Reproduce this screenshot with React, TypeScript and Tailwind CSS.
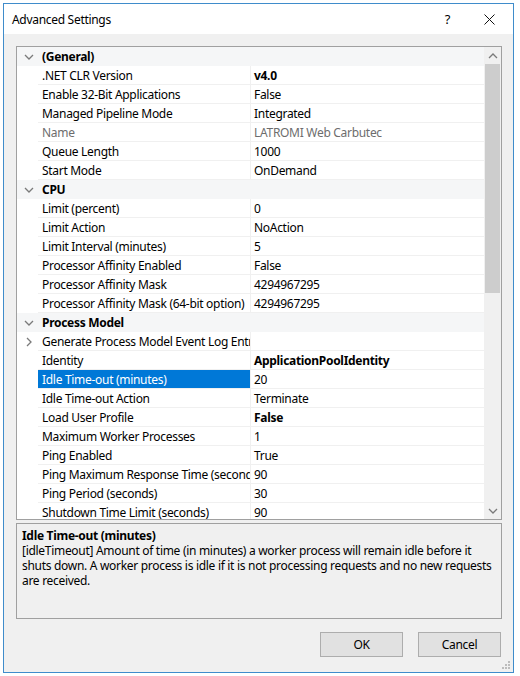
import React from "react";

type Row =
  | { kind: "cat"; label: string }
  | { kind: "prop"; label: string; value: string; bold?: boolean; disabled?: boolean; selected?: boolean; expandable?: boolean };

const ROWS: Row[] = [
  { kind: "cat", label: "(General)" },
  { kind: "prop", label: ".NET CLR Version", value: "v4.0", bold: true },
  { kind: "prop", label: "Enable 32-Bit Applications", value: "False" },
  { kind: "prop", label: "Managed Pipeline Mode", value: "Integrated" },
  { kind: "prop", label: "Name", value: "LATROMI Web Carbutec", disabled: true },
  { kind: "prop", label: "Queue Length", value: "1000" },
  { kind: "prop", label: "Start Mode", value: "OnDemand" },
  { kind: "cat", label: "CPU" },
  { kind: "prop", label: "Limit (percent)", value: "0" },
  { kind: "prop", label: "Limit Action", value: "NoAction" },
  { kind: "prop", label: "Limit Interval (minutes)", value: "5" },
  { kind: "prop", label: "Processor Affinity Enabled", value: "False" },
  { kind: "prop", label: "Processor Affinity Mask", value: "4294967295" },
  { kind: "prop", label: "Processor Affinity Mask (64-bit option)", value: "4294967295" },
  { kind: "cat", label: "Process Model" },
  { kind: "prop", label: "Generate Process Model Event Log Entry", value: "", expandable: true },
  { kind: "prop", label: "Identity", value: "ApplicationPoolIdentity", bold: true },
  { kind: "prop", label: "Idle Time-out (minutes)", value: "20", selected: true },
  { kind: "prop", label: "Idle Time-out Action", value: "Terminate" },
  { kind: "prop", label: "Load User Profile", value: "False", bold: true },
  { kind: "prop", label: "Maximum Worker Processes", value: "1" },
  { kind: "prop", label: "Ping Enabled", value: "True" },
  { kind: "prop", label: "Ping Maximum Response Time (seconds)", value: "90" },
  { kind: "prop", label: "Ping Period (seconds)", value: "30" },
  { kind: "prop", label: "Shutdown Time Limit (seconds)", value: "90" },
];

function Chevron({ dir }: { dir: "down" | "right" | "up" }) {
  const d =
    dir === "down" ? "M1 3 L5 7 L9 3" : dir === "up" ? "M1 7 L5 3 L9 7" : "M3 1 L7 5 L3 9";
  return (
    <svg width="10" height="10" viewBox="0 0 10 10" className="block">
      <path d={d} fill="none" stroke="#7a7a7a" strokeWidth="1.3" />
    </svg>
  );
}

function GridRow({ row }: { row: Row }) {
  if (row.kind === "cat") {
    return (
      <div className="flex h-[19px] shrink-0 items-center bg-[#f5f6f7]">
        <div className="flex w-[21px] justify-center pl-[2px]">
          <Chevron dir="down" />
        </div>
        <span className="pl-[4px] font-bold">{row.label}</span>
      </div>
    );
  }
  return (
    <div className="flex h-[19px] shrink-0">
      <div className="flex w-[21px] items-center justify-center pl-[2px]">
        {row.expandable && <Chevron dir="right" />}
      </div>
      <div
        className={`flex w-[212px] items-center overflow-hidden whitespace-nowrap border-b border-[#f0f0f0] pl-[4px] ${
          row.selected ? "bg-[#0078d7] text-white" : row.disabled ? "text-[#6d6d6d]" : ""
        }`}
      >
        {row.label}
      </div>
      <div
        className={`flex flex-1 items-center overflow-hidden whitespace-nowrap border-b border-l border-[#f0f0f0] pl-[3px] ${
          row.bold ? "font-bold" : ""
        } ${row.disabled ? "text-[#6d6d6d]" : ""}`}
      >
        {row.value}
      </div>
    </div>
  );
}

export default function App() {
  return (
    <div
      className="h-[676px] w-[520px] bg-white p-[3px] text-[12px] leading-[15px] tracking-[-0.3px] text-black"
      style={{ fontFamily: '"Noto Sans", "Open Sans", sans-serif' }}
    >
      <div className="flex h-full w-[511px] flex-col border border-[#3f8ccb]">
        {/* title bar */}
        <div className="flex h-[30px] shrink-0 items-center bg-white pl-[8px]">
          <span className="text-[12px]">Advanced Settings</span>
          <span className="ml-auto mr-[34px] text-[13px]">?</span>
          <svg width="11" height="11" viewBox="0 0 11 11" className="mr-[18px]">
            <path d="M0.5 0.5 L10.5 10.5 M10.5 0.5 L0.5 10.5" stroke="#111" strokeWidth="1" />
          </svg>
        </div>

        {/* body */}
        <div className="relative flex flex-1 flex-col bg-[#f0f0f0] px-[12px] pt-[12px]">
          {/* property grid */}
          <div className="flex h-[474px] w-[486px] shrink-0 border border-[#a0a0a0] bg-white">
            <div className="flex flex-1 flex-col overflow-hidden">
              {ROWS.map((r, i) => (
                <GridRow key={i} row={r} />
              ))}
            </div>
            <div className="flex w-[17px] flex-col bg-[#f0f0f0]">
              <div className="flex h-[17px] items-center justify-center">
                <Chevron dir="up" />
              </div>
              <div className="h-[229px] mx-[1px] bg-[#cdcdcd]" />
              <div className="flex-1" />
              <div className="flex h-[17px] items-center justify-center">
                <Chevron dir="down" />
              </div>
            </div>
          </div>

          {/* description */}
          <div className="mt-[3px] h-[96px] w-[486px] overflow-hidden whitespace-nowrap border border-[#a0a0a0] bg-[#f0f0f0] px-[5px] pt-[4px]">
            <div className="font-bold">Idle Time-out (minutes)</div>
            <div>[idleTimeout] Amount of time (in minutes) a worker process will remain idle before it</div>
            <div>shuts down. A worker process is idle if it is not processing requests and no new requests</div>
            <div>are received.</div>
          </div>

          {/* buttons */}
          <div className="mt-[13px] flex w-[486px] justify-end gap-[15px] pr-[1px]">
            <button className="h-[25px] w-[83px] border border-[#adadad] bg-[#e1e1e1]">OK</button>
            <button className="h-[25px] w-[83px] border border-[#adadad] bg-[#e1e1e1]">Cancel</button>
          </div>

          {/* resize grip */}
          <svg width="10" height="10" viewBox="0 0 10 10" className="absolute bottom-[2px] right-[2px]">
            {[
              [8, 2],
              [5, 5],
              [8, 5],
              [2, 8],
              [5, 8],
              [8, 8],
            ].map(([x, y], i) => (
              <rect key={i} x={x - 1} y={y - 1} width="2" height="2" fill="#bcbcbc" />
            ))}
          </svg>
        </div>
      </div>
    </div>
  );
}
